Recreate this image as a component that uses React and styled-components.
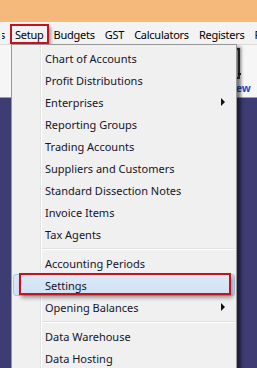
import { createGlobalStyle, styled } from "styled-components";

const GlobalStyle = createGlobalStyle`
  html, body {
    margin: 0;
    padding: 0;
    background: #3d3c73;
  }
  * {
    box-sizing: border-box;
  }
`;

const groups = [
  [
    { label: "Chart of Accounts" },
    { label: "Profit Distributions" },
    { label: "Enterprises", sub: true },
    { label: "Reporting Groups" },
    { label: "Trading Accounts" },
    { label: "Suppliers and Customers" },
    { label: "Standard Dissection Notes" },
    { label: "Invoice Items" },
    { label: "Tax Agents" },
  ],
  [
    { label: "Accounting Periods" },
    { label: "Settings", active: true },
    { label: "Opening Balances", sub: true },
  ],
  [{ label: "Data Warehouse" }, { label: "Data Hosting" }],
];

const topMenus = ["Setup", "Budgets", "GST", "Calculators", "Registers", "Reports"];

function App() {
  return (
    <Page>
      <GlobalStyle />
      <TitleBand />
      <MenuBar>
        <ClippedItem>Tools</ClippedItem>
        {topMenus.map((m) => (
          <MenuBarItem key={m} $marked={m === "Setup"}>
            {m}
          </MenuBarItem>
        ))}
      </MenuBar>
      <Toolbar>
        <ToolButton>
          <svg width="30" height="31" viewBox="0 0 30 31">
            <rect x="3" y="1" width="25" height="29" fill="#e8e8e8" stroke="#3a3a3a" strokeWidth="2" />
            <path d="M27 26 h3" stroke="#222" strokeWidth="2" />
          </svg>
          <ToolLabel>Overview</ToolLabel>
        </ToolButton>
      </Toolbar>
      <Workspace />

      <Dropdown>
        {groups.map((items, gi) => (
          <Group key={gi}>
            {gi > 0 && <Separator />}
            {items.map((it) => (
              <Item key={it.label} $active={it.active}>
                {it.label}
                {it.sub && <SubArrow />}
                {it.active && <Annotation />}
              </Item>
            ))}
          </Group>
        ))}
      </Dropdown>
    </Page>
  );
}

const Page = styled.div`
  position: relative;
  width: 257px;
  height: 368px;
  overflow: hidden;
  display: flex;
  flex-direction: column;
  font-family: "Noto Sans", "Open Sans", sans-serif;
  font-size: 11px;
  color: #141420;
`;

const TitleBand = styled.div`
  height: 22px;
  flex: none;
  background: #f5b97b;
`;

const MenuBar = styled.div`
  height: 22px;
  flex: none;
  display: flex;
  align-items: stretch;
  background: #f3f3f3;
  white-space: nowrap;
  overflow: hidden;
`;

const MenuBarItem = styled.div`
  flex: none;
  display: flex;
  align-items: center;
  padding: 0 3px;
  margin: 2px 0 0;
  border: 2px solid ${(p) => (p.$marked ? "#c3141d" : "transparent")};
  box-shadow: ${(p) => (p.$marked ? "2px 3px 3px rgba(0, 0, 0, 0.35)" : "none")};
  color: #000;
  font-size: 11px;
  letter-spacing: -0.25px;
`;

const ClippedItem = styled(MenuBarItem)`
  width: 10px;
  justify-content: flex-end;
  overflow: hidden;
`;

const Toolbar = styled.div`
  height: 54px;
  flex: none;
  display: flex;
  justify-content: flex-end;
  align-items: flex-start;
  padding: 3px 1px 0 0;
  background: #f6f6f6;
  border-top: 1px solid #dadada;
  border-bottom: 1px solid #9a9ab8;
`;

const ToolButton = styled.div`
  width: 60px;
  display: flex;
  flex-direction: column;
  align-items: center;
  gap: 3px;
`;

const ToolLabel = styled.span`
  font-weight: 700;
  font-size: 10.5px;
  line-height: 12px;
  color: #1d4fbf;
`;

const Workspace = styled.div`
  flex: 1;
  background: #3d3c73;
`;

const Dropdown = styled.div`
  position: absolute;
  top: 44px;
  left: 11px;
  width: 226px;
  padding: 2px 1px;
  background: #f0f0f0;
  border: 1px solid #979797;
  box-shadow: 4px 3px 3px rgba(0, 0, 0, 0.5);

  &::before {
    content: "";
    position: absolute;
    top: 0;
    bottom: 0;
    left: 28px;
    width: 1px;
    background: #e2e3e3;
    box-shadow: 1px 0 0 #ffffff;
  }
`;

const Group = styled.div`
  display: flex;
  flex-direction: column;
`;

const Item = styled.div`
  position: relative;
  height: 22px;
  display: flex;
  align-items: center;
  padding: 0 9px 0 31px;
  border: 1px solid ${(p) => (p.$active ? "#a8c8ec" : "transparent")};
  border-radius: 3px;
  background: ${(p) =>
    p.$active ? "linear-gradient(#dce9f7, #d1e2f4)" : "transparent"};
  white-space: nowrap;
  color: #14142a;
`;

const SubArrow = styled.span`
  margin-left: auto;
  width: 0;
  height: 0;
  border-left: 4px solid #111;
  border-top: 4px solid transparent;
  border-bottom: 4px solid transparent;
`;

const Annotation = styled.span`
  position: absolute;
  left: 5px;
  right: 3px;
  top: -2px;
  bottom: 0;
  border: 2px solid #c3141d;
  box-shadow: 2px 3px 4px rgba(0, 0, 0, 0.35);
  pointer-events: none;
`;

const Separator = styled.div`
  height: 1px;
  margin: 3px 0 2px 28px;
  background: #e0e0e0;
  border-bottom: 1px solid #ffffff;
  box-sizing: content-box;
`;

export default App;
